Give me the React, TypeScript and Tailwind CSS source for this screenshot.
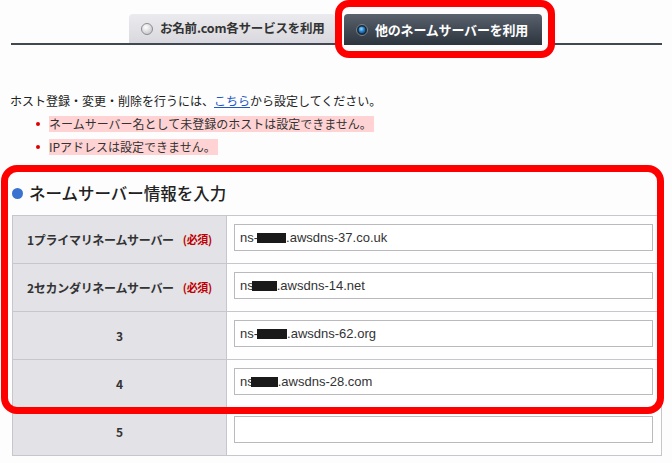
import React from "react";

const jp = "font-['Noto_Sans_CJK_JP','Noto_Sans',sans-serif]";

function Radio({ on }: { on?: boolean }) {
  if (on) {
    return (
      <svg width="12" height="12" viewBox="0 0 12 12" className="shrink-0">
        <defs>
          <radialGradient id="rb" cx="0.4" cy="0.35" r="0.7">
            <stop offset="0" stopColor="#9fd8ff" />
            <stop offset="0.5" stopColor="#2a8ad8" />
            <stop offset="1" stopColor="#0b4a86" />
          </radialGradient>
        </defs>
        <circle cx="6" cy="6" r="5.5" fill="#1d252d" stroke="#7d858e" strokeWidth="1" />
        <circle cx="6" cy="6" r="3.4" fill="url(#rb)" />
      </svg>
    );
  }
  return (
    <svg width="12" height="12" viewBox="0 0 12 12" className="shrink-0">
      <defs>
        <radialGradient id="rg" cx="0.4" cy="0.35" r="0.7">
          <stop offset="0" stopColor="#ffffff" />
          <stop offset="1" stopColor="#c4c4c8" />
        </radialGradient>
      </defs>
      <circle cx="6" cy="6" r="5.5" fill="url(#rg)" stroke="#8d8d92" strokeWidth="1" />
    </svg>
  );
}

function Redacted({ className }: { className: string }) {
  return <span className={"inline-block h-[10px] bg-[#1a1a1a] align-[-1px] " + className} />;
}

const rows = [
  { label: "1プライマリネームサーバー", req: true, pre: "ns-", block: "w-[29px] -ml-[1px]", post: ".awsdns-37.co.uk" },
  { label: "2セカンダリネームサーバー", req: true, pre: "ns", block: "w-[25px] -ml-[2px]", post: ".awsdns-14.net" },
  { label: "3", req: false, pre: "ns-", block: "w-[30px] -ml-[1px]", post: ".awsdns-62.org" },
  { label: "4", req: false, pre: "ns", block: "w-[27px] -ml-[3px]", post: ".awsdns-28.com" },
  { label: "5", req: false, pre: "", block: "", post: "" },
];

export default function App() {
  return (
    <div className={"min-h-[463px] w-[672px] bg-[#fcfdfc] text-[#222] " + jp}>
      {/* tabs */}
      <div className="ml-[11px] mr-[10px] flex h-[45px] items-end border-b-2 border-[#3f4853] pl-[118px]">
        <div className="flex h-[29px] w-[206px] items-center gap-[7px] rounded-t-[4px] bg-gradient-to-b from-[#ebebef] to-[#d8d8de] pl-[12px] text-[12.5px] font-bold tracking-[-0.2px] text-[#333]">
          <Radio />
          <span>お名前.com各サービスを利用</span>
        </div>
        <div className="relative z-10 -mb-[15px] ml-[0px] rounded-[14px] border-[7px] border-[#ff0000] bg-[#fcfdfc] pb-[6px] pl-[2px] pr-[6px] pt-[7px]">
          <div className="flex h-[31px] w-[198px] items-center gap-[7px] rounded-t-[4px] bg-gradient-to-b from-[#5a636d] to-[#2c343e] pl-[12px] text-[13px] font-bold tracking-[-0.2px] text-white">
            <Radio on />
            <span>他のネームサーバーを利用</span>
          </div>
        </div>
      </div>

      {/* notes */}
      <div className="px-[10px] pt-[48px] text-[12px] leading-[16px]">
        <p>
          ホスト登録・変更・削除を行うには、
          <a className="text-[#1f56c8] underline">こちら</a>
          から設定してください。
        </p>
        <ul className="mt-[7px] flex flex-col gap-[7px] pl-[26px] text-[#333]">
          <li className="flex items-center gap-[9px]">
            <span className="h-[4px] w-[4px] rounded-full bg-[#e00000]" />
            <span className="bg-[#ffd3d3] pr-[2px]">ネームサーバー名として未登録のホストは設定できません。</span>
          </li>
          <li className="flex items-center gap-[9px]">
            <span className="h-[4px] w-[4px] rounded-full bg-[#e00000]" />
            <span className="bg-[#ffd3d3] pr-[2px]">IPアドレスは設定できません。</span>
          </li>
        </ul>
      </div>

      {/* name server form */}
      <div className="relative mt-[10px] pl-[12px] pr-[10px] pt-[17px]">
        <div className="flex h-[22px] items-center gap-[6px]">
          <span className="h-[11px] w-[11px] rounded-full bg-[#3a72d0]" />
          <h2 className="text-[16.5px] font-medium leading-[22px] text-[#222]">ネームサーバー情報を入力</h2>
        </div>
        <div className="mt-[11px] border-l border-r border-t border-[#c6c6cc]">
          {rows.map((r) => (
            <div key={r.label} className="flex h-[48px] border-b border-[#c6c6cc]">
              <div className="flex w-[214px] items-center justify-center gap-[9px] border-r border-[#c6c6cc] bg-[#e2e2e7] text-[12px] font-bold tracking-[-0.3px] text-[#333]">
                <span>{r.label}</span>
                {r.req && <span className="text-[11px] text-[#c00000]">(必須)</span>}
              </div>
              <div className="flex-1 bg-[#fdfefd] pl-[7px] pr-[8px] pt-[8px]">
                <div className="flex h-[27px] items-center border border-[#b9b9be] bg-white pl-[5px] font-['Liberation_Sans',Arial,sans-serif] text-[13px] text-[#333]">
                  {r.pre && (
                    <span className="whitespace-nowrap">
                      {r.pre}
                      <Redacted className={r.block} />
                      {r.post}
                    </span>
                  )}
                </div>
              </div>
            </div>
          ))}
        </div>
        <div className="pointer-events-none absolute left-[1px] top-0 h-[249px] w-[663px] rounded-[16px] border-[7px] border-[#ff0000]" />
      </div>
    </div>
  );
}
